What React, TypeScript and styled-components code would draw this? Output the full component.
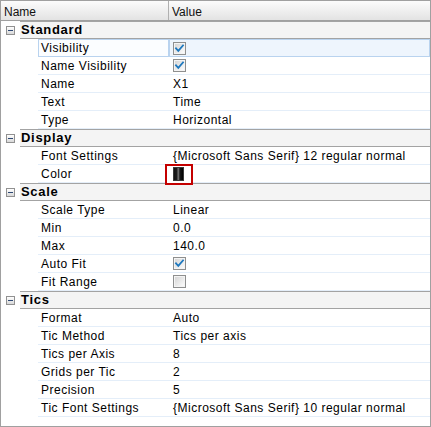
import React from 'react';
import styled, { createGlobalStyle } from 'styled-components';

const Global = createGlobalStyle`
  html, body { margin: 0; padding: 0; background: #fff; }
  body { font-family: "Liberation Sans", Arial, sans-serif; }
`;

const Grid = styled.div`
  width: 431px;
  height: 427px;
  box-sizing: border-box;
  border: 1px solid #a0a0a0;
  display: flex;
  flex-direction: column;
  background: #fff;
  overflow: hidden;
  font-family: "Liberation Sans", Arial, sans-serif;
  color: #000;
`;

const Header = styled.div`
  display: flex;
  flex: none;
  height: 20px;
  box-sizing: border-box;
  border-bottom: 1px solid #a0a0a0;
  background: linear-gradient(#fcfcfc, #e3e3e3);
  font-size: 12px;
`;

const HeaderCell = styled.div<{ $w?: number }>`
  ${(p) => (p.$w ? `width: ${p.$w}px; flex: none; border-right: 1px solid #b0b0b0;` : 'flex: 1;')}
  box-sizing: border-box;
  padding: 4px 0 0 3px;
  line-height: 14px;
  color: #111;
`;

const Body = styled.div`
  display: flex;
  flex-direction: column;
  flex: 1;
`;

const GroupRow = styled.div`
  display: flex;
  height: 18px;
  flex: none;
`;

const Expander = styled.div`
  width: 19px;
  flex: none;
  display: flex;
  align-items: center;
  justify-content: center;
`;

const ExpandBox = styled.div`
  width: 9px;
  height: 9px;
  box-sizing: border-box;
  border: 1px solid #919191;
  background: linear-gradient(#ffffff, #d8d8d8);
  display: flex;
  align-items: center;
  justify-content: center;
  &::after {
    content: '';
    width: 5px;
    height: 1px;
    background: #2d4873;
  }
`;

const GroupBody = styled.div`
  flex: 1;
  box-sizing: border-box;
  border-top: 1px solid #a3a3a3;
  border-bottom: 1px solid #a3a3a3;
  background: #f4f4f4;
  font-size: 13px;
  font-weight: bold;
  letter-spacing: 0.7px;
  line-height: 16px;
  padding-left: 1px;
`;

const PropRow = styled.div`
  display: flex;
  height: 18px;
  flex: none;
  font-size: 12px;
  letter-spacing: 0.5px;
`;

const Indent = styled.div`
  width: 37px;
  flex: none;
`;

const Cell = styled.div<{ $selected?: boolean; $w?: number; $pad: number }>`
  ${(p) => (p.$w ? `width: ${p.$w}px; flex: none;` : 'flex: 1;')}
  position: relative;
  box-sizing: border-box;
  display: flex;
  align-items: center;
  white-space: nowrap;
  border-bottom: 1px solid #e4eef9;
  padding-left: ${(p) => p.$pad}px;
  ${(p) =>
    p.$selected
      ? `border: 1px solid #b9d3ef; padding-left: ${p.$pad - 1}px;`
      : ''}
`;

const NameCell = styled(Cell)`
  ${(p) => (p.$selected ? 'background: #fbfdff;' : '')}
`;

const ValueCell = styled(Cell)`
  ${(p) => (p.$selected ? 'background: #eef5fd;' : '')}
`;

const ColorEditor = styled.div`
  position: absolute;
  left: -4px;
  top: -1px;
  width: 28px;
  height: 21px;
  box-sizing: border-box;
  border: 2px solid #c40000;
  background: #fff;
  z-index: 2;
`;

const Swatch = styled.div`
  position: absolute;
  left: 6px;
  top: 1px;
  width: 11px;
  height: 14px;
  box-sizing: border-box;
  border: 1px solid #3a3a3a;
  background: linear-gradient(
    90deg,
    #111 0%,
    #1c1c1c 30%,
    #5a5a5a 42%,
    #6e6e6e 52%,
    #1a1a1a 64%,
    #000 100%
  );
`;

const Check = ({ checked }: { checked: boolean }) => (
  <svg width="13" height="13" viewBox="0 0 13 13" style={{ display: 'block' }}>
    <defs>
      <linearGradient id={checked ? 'cbg1' : 'cbg0'} x1="0" y1="0" x2="1" y2="1">
        <stop offset="0" stopColor="#d6d6d6" />
        <stop offset="1" stopColor="#fbfbfb" />
      </linearGradient>
    </defs>
    <rect x="0.5" y="0.5" width="12" height="12" fill="#f4f4f4" stroke="#8e8f8f" />
    <rect x="2" y="2" width="9" height="9" fill={`url(#${checked ? 'cbg1' : 'cbg0'})`} />
    {checked && (
      <path
        d="M3 6.3 L5.3 8.8 L10 3.4"
        fill="none"
        stroke="#1e78be"
        strokeWidth="1.8"
        strokeLinecap="square"
      />
    )}
  </svg>
);

type Val =
  | { kind: 'text'; text: string }
  | { kind: 'check'; checked: boolean }
  | { kind: 'color' };

type Prop = { name: string; value: Val; selected?: boolean };
type Group = { name: string; props: Prop[] };

const t = (text: string): Val => ({ kind: 'text', text });
const c = (checked: boolean): Val => ({ kind: 'check', checked });

const groups: Group[] = [
  {
    name: 'Standard',
    props: [
      { name: 'Visibility', value: c(true), selected: true },
      { name: 'Name Visibility', value: c(true) },
      { name: 'Name', value: t('X1') },
      { name: 'Text', value: t('Time') },
      { name: 'Type', value: t('Horizontal') },
    ],
  },
  {
    name: 'Display',
    props: [
      { name: 'Font Settings', value: t('{Microsoft Sans Serif} 12 regular normal') },
      { name: 'Color', value: { kind: 'color' } },
    ],
  },
  {
    name: 'Scale',
    props: [
      { name: 'Scale Type', value: t('Linear') },
      { name: 'Min', value: t('0.0') },
      { name: 'Max', value: t('140.0') },
      { name: 'Auto Fit', value: c(true) },
      { name: 'Fit Range', value: c(false) },
    ],
  },
  {
    name: 'Tics',
    props: [
      { name: 'Format', value: t('Auto') },
      { name: 'Tic Method', value: t('Tics per axis') },
      { name: 'Tics per Axis', value: t('8') },
      { name: 'Grids per Tic', value: t('2') },
      { name: 'Precision', value: t('5') },
      { name: 'Tic Font Settings', value: t('{Microsoft Sans Serif} 10 regular normal') },
    ],
  },
];

const renderValue = (v: Val) => {
  if (v.kind === 'text') return v.text;
  if (v.kind === 'check') return <Check checked={v.checked} />;
  return (
    <ColorEditor>
      <Swatch />
    </ColorEditor>
  );
};

export default function App() {
  return (
    <>
      <Global />
      <Grid>
        <Header>
          <HeaderCell $w={168}>Name</HeaderCell>
          <HeaderCell>Value</HeaderCell>
        </Header>
        <Body>
          {groups.map((g) => (
            <React.Fragment key={g.name}>
              <GroupRow>
                <Expander>
                  <ExpandBox />
                </Expander>
                <GroupBody>{g.name}</GroupBody>
              </GroupRow>
              {g.props.map((p) => (
                <PropRow key={p.name}>
                  <Indent />
                  <NameCell $w={131} $pad={3} $selected={p.selected}>
                    {p.name}
                  </NameCell>
                  <ValueCell $pad={4} $selected={p.selected}>
                    {renderValue(p.value)}
                  </ValueCell>
                </PropRow>
              ))}
            </React.Fragment>
          ))}
        </Body>
      </Grid>
    </>
  );
}
